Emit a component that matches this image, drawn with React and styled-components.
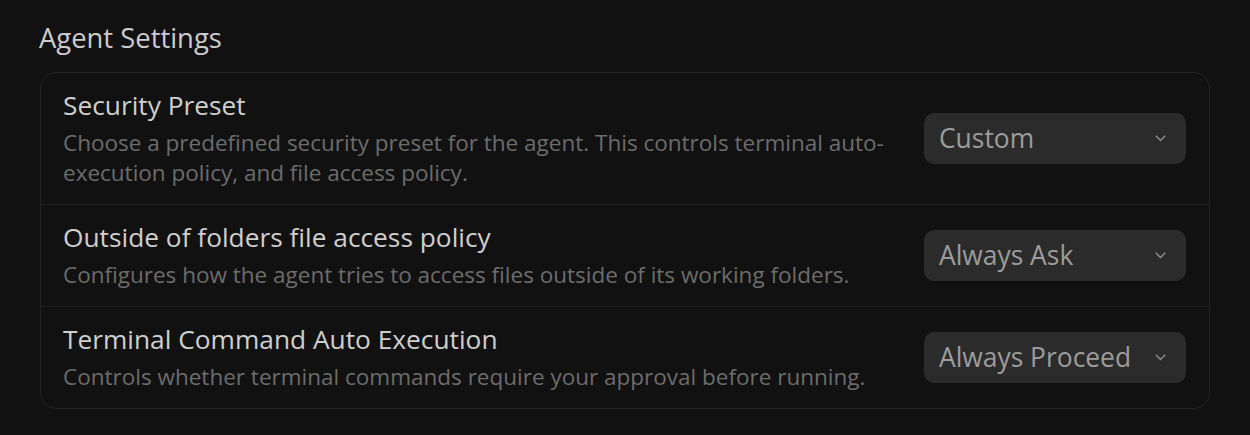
import React from "react";
import styled, { createGlobalStyle } from "styled-components";

const GlobalStyle = createGlobalStyle`
  html, body {
    margin: 0;
    padding: 0;
    background: #111111;
  }
  body {
    font-family: "Open Sans", "Noto Sans", "DejaVu Sans", sans-serif;
    -webkit-font-smoothing: antialiased;
  }
`;

const Page = styled.div`
  box-sizing: border-box;
  width: 1250px;
  min-height: 435px;
  padding: 20px 40px 0 40px;
  background: #111111;
`;

const Heading = styled.h2`
  margin: 0 0 16px -1px;
  font-size: 27.4px;
  line-height: 36px;
  font-weight: 400;
  color: #cccccc;
`;

const Card = styled.section`
  border: 1px solid #232323;
  border-radius: 16px;
  background: #111111;
  overflow: hidden;
`;

const Row = styled.div`
  display: flex;
  align-items: center;
  gap: 16px;
  padding: 15px 23px 16px 22px;
  & + & {
    border-top: 1px solid #1f1f1f;
  }
`;

const Text = styled.div`
  flex: 1;
  min-width: 0;
`;

const Title = styled.div`
  font-size: 26.3px;
  line-height: 34px;
  color: #cfcfcf;
`;

const Description = styled.div`
  margin-top: 6px;
  font-size: 22.5px;
  line-height: 30px;
  color: #6c6c6c;
`;

const Select = styled.button`
  box-sizing: border-box;
  flex: 0 0 262px;
  height: 51px;
  display: flex;
  align-items: center;
  justify-content: space-between;
  padding: 0 20px 0 15px;
  border: none;
  border-radius: 10px;
  background: #2b2b2b;
  color: #9c9c9c;
  font-family: inherit;
  font-size: 26.4px;
  line-height: 34px;
  cursor: pointer;
`;

const Chevron = () => (
  <svg width="11" height="7" viewBox="0 0 11 7" fill="none">
    <path d="M0.8 0.8 L5.5 5.5 L10.2 0.8" stroke="#8e8e8e" strokeWidth="1.4" />
  </svg>
);

const settings = [
  {
    title: "Security Preset",
    description:
      "Choose a predefined security preset for the agent. This controls terminal auto-execution policy, and file access policy.",
    value: "Custom",
  },
  {
    title: "Outside of folders file access policy",
    description:
      "Configures how the agent tries to access files outside of its working folders.",
    value: "Always Ask",
  },
  {
    title: "Terminal Command Auto Execution",
    description:
      "Controls whether terminal commands require your approval before running.",
    value: "Always Proceed",
  },
];

export default function App() {
  return (
    <>
      <GlobalStyle />
      <Page>
        <Heading>Agent Settings</Heading>
        <Card>
          {settings.map((s) => (
            <Row key={s.title}>
              <Text>
                <Title>{s.title}</Title>
                <Description>{s.description}</Description>
              </Text>
              <Select type="button">
                <span>{s.value}</span>
                <Chevron />
              </Select>
            </Row>
          ))}
        </Card>
      </Page>
    </>
  );
}
